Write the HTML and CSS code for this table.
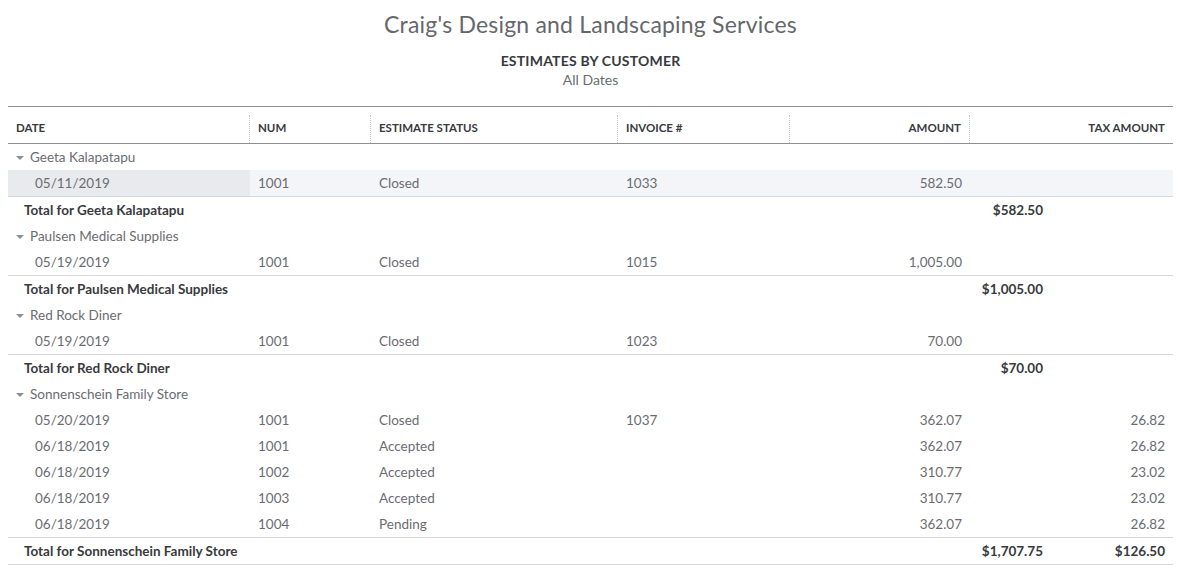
FILE: index.html
```html
<!DOCTYPE html>
<html>
<head>
<meta charset="utf-8">
<title>Estimates by Customer</title>
<link rel="stylesheet" href="styles.css">
</head>
<body>
<div class="report">
  <header class="report-head">
    <h1 class="company">Craig's Design and Landscaping Services</h1>
    <h2 class="report-title">ESTIMATES BY CUSTOMER</h2>
    <div class="report-period">All Dates</div>
  </header>

  <div class="table">
    <div class="row head">
      <div class="hcell">Date</div>
      <div class="hcell">Num</div>
      <div class="hcell">Estimate Status</div>
      <div class="hcell">Invoice #</div>
      <div class="hcell num">Amount</div>
      <div class="hcell num last">Tax Amount</div>
    </div>

    <div class="group-row"><span class="caret"></span>Geeta Kalapatapu</div>
    <div class="row data hl end">
      <div class="cell date">05/11/2019</div>
      <div class="cell">1001</div>
      <div class="cell">Closed</div>
      <div class="cell">1033</div>
      <div class="cell num">582.50</div>
      <div class="cell num"></div>
    </div>
    <div class="total-row">
      <div class="tcell label">Total for Geeta Kalapatapu</div>
      <div class="tcell num">$582.50</div>
      <div class="tcell num"></div>
    </div>

    <div class="group-row"><span class="caret"></span>Paulsen Medical Supplies</div>
    <div class="row data end">
      <div class="cell date">05/19/2019</div>
      <div class="cell">1001</div>
      <div class="cell">Closed</div>
      <div class="cell">1015</div>
      <div class="cell num">1,005.00</div>
      <div class="cell num"></div>
    </div>
    <div class="total-row">
      <div class="tcell label">Total for Paulsen Medical Supplies</div>
      <div class="tcell num">$1,005.00</div>
      <div class="tcell num"></div>
    </div>

    <div class="group-row"><span class="caret"></span>Red Rock Diner</div>
    <div class="row data end">
      <div class="cell date">05/19/2019</div>
      <div class="cell">1001</div>
      <div class="cell">Closed</div>
      <div class="cell">1023</div>
      <div class="cell num">70.00</div>
      <div class="cell num"></div>
    </div>
    <div class="total-row">
      <div class="tcell label">Total for Red Rock Diner</div>
      <div class="tcell num">$70.00</div>
      <div class="tcell num"></div>
    </div>

    <div class="group-row"><span class="caret"></span>Sonnenschein Family Store</div>
    <div class="row data">
      <div class="cell date">05/20/2019</div>
      <div class="cell">1001</div>
      <div class="cell">Closed</div>
      <div class="cell">1037</div>
      <div class="cell num">362.07</div>
      <div class="cell num">26.82</div>
    </div>
    <div class="row data">
      <div class="cell date">06/18/2019</div>
      <div class="cell">1001</div>
      <div class="cell">Accepted</div>
      <div class="cell"></div>
      <div class="cell num">362.07</div>
      <div class="cell num">26.82</div>
    </div>
    <div class="row data">
      <div class="cell date">06/18/2019</div>
      <div class="cell">1002</div>
      <div class="cell">Accepted</div>
      <div class="cell"></div>
      <div class="cell num">310.77</div>
      <div class="cell num">23.02</div>
    </div>
    <div class="row data">
      <div class="cell date">06/18/2019</div>
      <div class="cell">1003</div>
      <div class="cell">Accepted</div>
      <div class="cell"></div>
      <div class="cell num">310.77</div>
      <div class="cell num">23.02</div>
    </div>
    <div class="row data end">
      <div class="cell date">06/18/2019</div>
      <div class="cell">1004</div>
      <div class="cell">Pending</div>
      <div class="cell"></div>
      <div class="cell num">362.07</div>
      <div class="cell num">26.82</div>
    </div>
    <div class="total-row final">
      <div class="tcell label">Total for Sonnenschein Family Store</div>
      <div class="tcell num">$1,707.75</div>
      <div class="tcell num">$126.50</div>
    </div>
  </div>
</div>
</body>
</html>
```

FILE: styles.css
```css
* { box-sizing: border-box; }

body {
  margin: 0;
  background: #ffffff;
  font-family: "Lato", "Liberation Sans", sans-serif;
  color: #6b6c72;
}

.report {
  width: 1165px;
  margin-left: 8px;
}

.report-head {
  text-align: center;
  padding-top: 10px;
}

.company {
  margin: 0;
  font-size: 23px;
  line-height: 28px;
  font-weight: 400;
  color: #66676c;
  letter-spacing: 0.2px;
}

.report-title {
  margin: 14px 0 0;
  font-size: 14px;
  line-height: 18px;
  font-weight: 700;
  color: #393a3d;
  letter-spacing: 0.2px;
}

.report-period {
  margin-top: 1px;
  font-size: 14px;
  line-height: 18px;
  color: #6b6c72;
}

.table {
  margin-top: 17px;
  border-top: 1px solid #8d9096;
}

.row {
  display: grid;
  grid-template-columns: 242px 121px 247px 172px 180px 203px;
}

.row.head {
  height: 37px;
  align-items: end;
  border-bottom: 1px solid #8d9096;
}

.hcell {
  height: 28px;
  padding: 5px 8px 0;
  font-size: 11.5px;
  line-height: 16px;
  font-weight: 700;
  text-transform: uppercase;
  color: #393a3d;
  border-right: 1px dotted #c4c6cb;
}

.hcell.last { border-right: none; }

.num { text-align: right; }

.row.data {
  height: 26px;
}

.row.data.end {
  height: 27px;
  border-bottom: 1px solid #d4d7dc;
}

.cell {
  padding: 0 8px;
  font-size: 13.5px;
  line-height: 26px;
  white-space: nowrap;
}

.cell.date { padding-left: 27px; }

.row.hl { background: #f4f5f8; }
.row.hl .cell.date { background: #e9eaee; }

.group-row {
  display: flex;
  align-items: center;
  height: 26px;
  padding-left: 8px;
  font-size: 13.5px;
  line-height: 26px;
  color: #6b6c72;
}

.caret {
  width: 0;
  height: 0;
  margin: 1px 6px 0 0;
  border-left: 4px solid transparent;
  border-right: 4px solid transparent;
  border-top: 4px solid #8d9096;
}

.total-row {
  display: grid;
  grid-template-columns: 961px 82px 122px;
  height: 26px;
}

.total-row.final {
  height: 27px;
  border-bottom: 1px solid #d4d7dc;
}

.tcell {
  padding: 0 8px;
  font-size: 13.5px;
  line-height: 26px;
  font-weight: 700;
  color: #393a3d;
  white-space: nowrap;
}

.tcell.label { padding-left: 16px; }
```
